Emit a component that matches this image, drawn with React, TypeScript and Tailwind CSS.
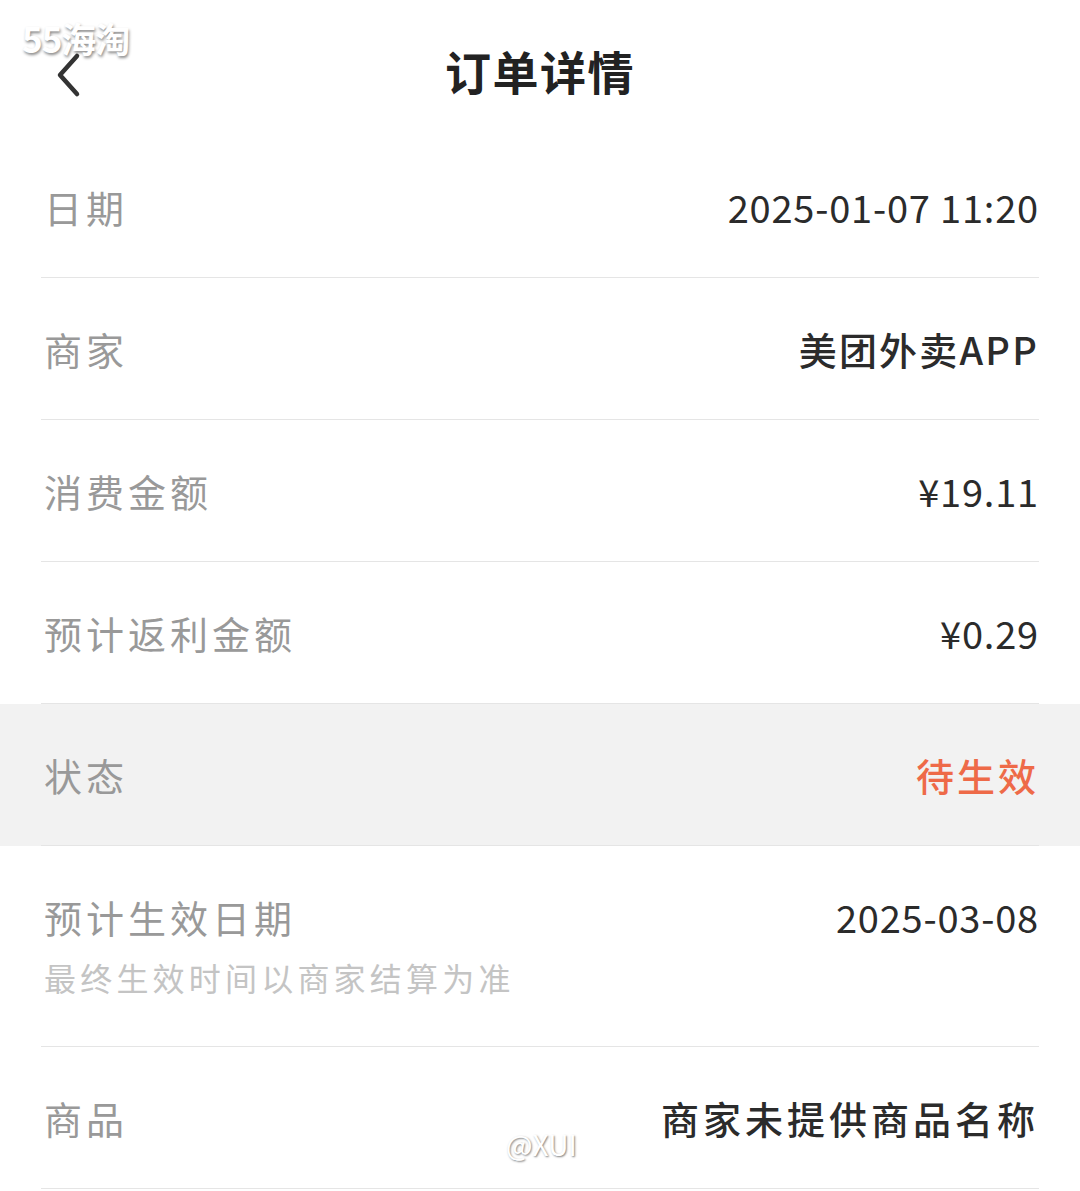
import React from 'react';

type Row = {
  label: string;
  value: string;
  note?: string;
  highlight?: boolean;
  cjk?: boolean;
};

const rows: Row[] = [
  { label: '日期', value: '2025-01-07 11:20' },
  { label: '商家', value: '美团外卖APP', cjk: true },
  { label: '消费金额', value: '¥19.11' },
  { label: '预计返利金额', value: '¥0.29' },
  { label: '状态', value: '待生效', highlight: true },
  { label: '预计生效日期', value: '2025-03-08', note: '最终生效时间以商家结算为准' },
  { label: '商品', value: '商家未提供商品名称', cjk: true },
];

const App: React.FC = () => {
  return (
    <div className="relative min-h-[1191px] w-[1080px] bg-white font-['Noto_Sans_CJK_SC',sans-serif]">
      {/* header */}
      <div className="grid h-[136px] grid-cols-[1fr_auto_1fr] items-center">
        <div className="flex items-center pl-[54px] pt-[14px]">
          <svg width="30" height="46" viewBox="0 0 30 46" fill="none">
            <path d="M23 4 L6 23 L23 42" stroke="#333" strokeWidth="4.5" strokeLinecap="round" strokeLinejoin="round" />
          </svg>
        </div>
        <h1 className="mt-[4px] text-[46px] font-bold tracking-[1.5px] text-[#222]">订单详情</h1>
        <div />
      </div>

      {/* watermark */}
      <div className="absolute left-[22px] top-[20px] text-[35px] font-bold leading-none tracking-[-1px] text-white [text-shadow:1px_2px_3px_rgba(0,0,0,0.45)]">
        55海淘
      </div>

      <div>
        {rows.map((row) => (
          <div key={row.label} className={row.highlight ? 'bg-[#f2f2f2]' : 'bg-white'}>
            <div
              className={`mx-[41px] flex justify-between border-b border-[#e5e5e5] ${
                row.note ? 'h-[201px] items-start pt-[48px]' : 'h-[142px] items-center'
              }`}
            >
              <div>
                <div className="pl-[3px] text-[38px] leading-[1.2] tracking-[4px] text-[#999]">{row.label}</div>
                {row.note && (
                  <div className="mt-[18px] pl-[3px] text-[32px] leading-[1.2] tracking-[4.2px] text-[#c4c4c4]">
                    {row.note}
                  </div>
                )}
              </div>
              <div
                className={`text-[38px] leading-[1.2] ${
                  row.highlight
                    ? 'font-medium tracking-[3px] text-[#ee6a48]'
                    : row.cjk
                      ? 'font-medium tracking-[2.2px] text-[#2b2b2b]'
                      : 'tracking-[0.8px] text-[#2b2b2b]'
                }`}
              >
                {row.value.startsWith('商家未') ? <span className="tracking-[4px]">{row.value}</span> : row.value}
              </div>
            </div>
          </div>
        ))}
      </div>

      {/* watermark */}
      <div className="absolute left-[506px] top-[1130px] text-[28px] leading-none text-white [text-shadow:1px_1px_2px_rgba(0,0,0,0.5)]">
        @XUI
      </div>
    </div>
  );
};

export default App;
